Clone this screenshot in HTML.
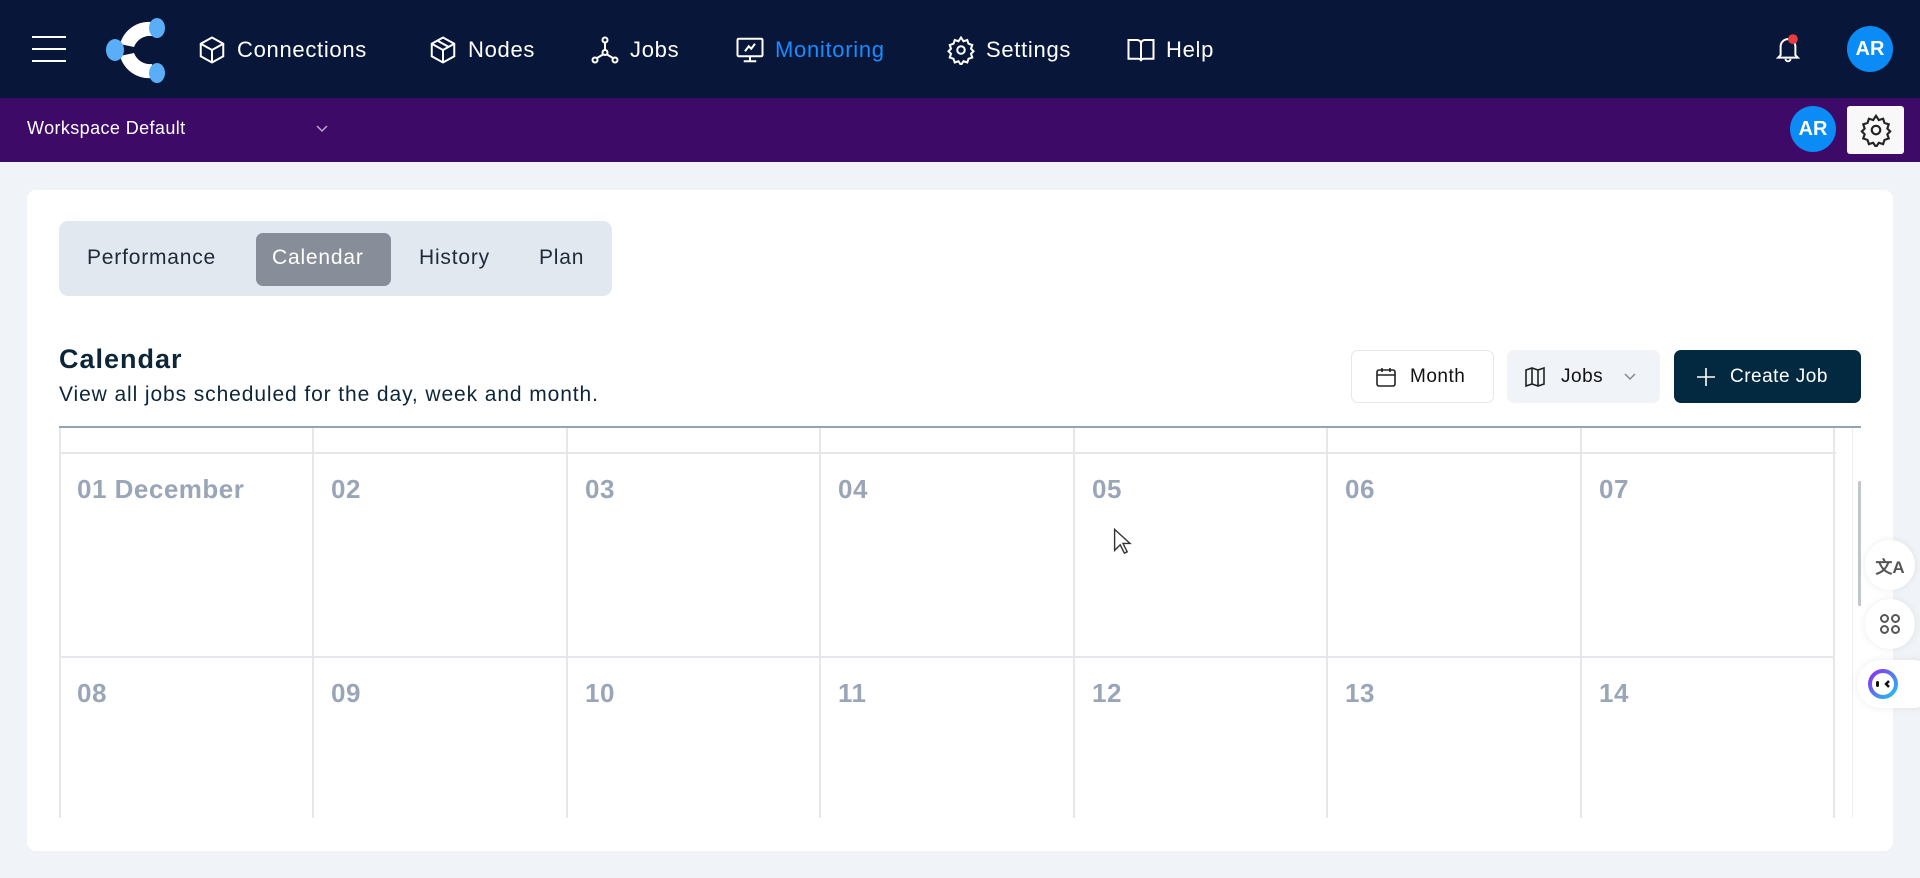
<!DOCTYPE html>
<html><head><meta charset="utf-8"><style>
*{box-sizing:border-box;margin:0;padding:0}
body{width:1920px;height:878px;overflow:hidden;background:#f0f3f7;font-family:"Liberation Sans",sans-serif;position:relative}
.top{position:absolute;left:0;top:0;width:1920px;height:98px;background:#081739}
.ws{position:absolute;left:0;top:98px;width:1920px;height:64px;background:#3d0a68}
.nav{position:absolute;top:35px;color:#fff;font-size:22px;display:flex;align-items:center;gap:10px;letter-spacing:0.7px}
.nav svg{width:30px;height:30px;fill:none;stroke:#fff;stroke-width:1.6}
.av{position:absolute;width:46px;height:46px;border-radius:50%;background:#0a8bf5;color:#fff;font-weight:bold;font-size:20px;display:flex;align-items:center;justify-content:center}
.card{position:absolute;left:27px;top:190px;width:1866px;height:661px;background:#fff;border-radius:9px}
.tabs{position:absolute;left:59px;top:221px;width:553px;height:75px;background:#e2e8f0;border-radius:9px}
.tab{position:absolute;top:246px;font-size:21px;color:#1e2a36;letter-spacing:0.8px}
.btn{position:absolute;top:350px;height:53px;border-radius:7px;display:flex;align-items:center;font-size:19px;letter-spacing:0.5px}
.num{position:absolute;font-size:26px;color:#9aa6b8;font-weight:bold;letter-spacing:0.5px}
.fb{position:absolute;width:50px;height:50px;border-radius:50%;background:#fff;box-shadow:0 0 8px rgba(0,0,0,.08);display:flex;align-items:center;justify-content:center}
</style></head><body>
<div class="top"></div>
<div class="ws"></div>
<div style="position:absolute;left:32px;top:36px;width:34px;height:2px;background:#fff"></div>
<div style="position:absolute;left:32px;top:48px;width:34px;height:2px;background:#fff"></div>
<div style="position:absolute;left:32px;top:60px;width:34px;height:2px;background:#fff"></div>
<svg style="position:absolute;left:100px;top:16px" width="70" height="68" viewBox="0 0 70 68">
<path d="M52 6 A30 30 0 0 0 20 28 L34 31 A17 17 0 0 1 52 20Z" fill="#fff"/>
<path d="M20 40 A30 30 0 0 0 52 62 L52 48 A17 17 0 0 1 34 37Z" fill="#fff"/>
<ellipse cx="57" cy="12" rx="8" ry="10" fill="#5aaef7"/>
<ellipse cx="15" cy="34" rx="9" ry="11" fill="#5aaef7"/>
<ellipse cx="57" cy="57" rx="8" ry="10" fill="#5aaef7"/>
</svg>
<div class="nav" style="left:197px"><svg viewBox="0 0 24 24"><path d="M12 2l9 5v10l-9 5-9-5V7z M3 7l9 5 9-5 M12 12v10"/></svg>Connections</div>
<div class="nav" style="left:428px"><svg viewBox="0 0 24 24"><path d="M12 2l9 5v10l-9 5-9-5V7z M3 7l9 5 9-5 M12 12v10 M7.5 4.5l9 5"/></svg>Nodes</div>
<div class="nav" style="left:590px"><svg viewBox="0 0 24 24"><circle cx="12" cy="4" r="2"/><circle cx="4" cy="20" r="2"/><circle cx="20" cy="20" r="2"/><circle cx="12" cy="14" r="2"/><path d="M12 6v6 M10.5 15.5l-5 3 M13.5 15.5l5 3"/></svg>Jobs</div>
<div class="nav" style="left:735px;color:#1a8cff"><svg viewBox="0 0 24 24"><rect x="2" y="3" width="20" height="14" rx="1"/><path d="M12 17v4 M7 21h10 M8 13l3-4 2 2 3-4"/></svg>Monitoring</div>
<div class="nav" style="left:946px"><svg viewBox="0 0 24 24"><circle cx="12" cy="12" r="3"/><path d="M12 2l2 3 3-1 1 3 3 1-1 3 2 2-2 2 1 3-3 1-1 3-3-1-2 3-2-3-3 1-1-3-3-1 1-3-2-2 2-2-1-3 3-1 1-3 3 1z"/></svg>Settings</div>
<div class="nav" style="left:1126px"><svg viewBox="0 0 24 24"><path d="M2 4h7a3 3 0 0 1 3 3v14a2 2 0 0 0-2-2H2z M22 4h-7a3 3 0 0 0-3 3v14a2 2 0 0 1 2-2h8z"/></svg>Help</div>
<svg style="position:absolute;left:1773px;top:33px" width="30" height="32" viewBox="0 0 24 26"><path d="M6 18V11a6 6 0 0 1 12 0v7l2 2H4z M10 21a2 2 0 0 0 4 0" fill="none" stroke="#fff" stroke-width="1.6"/><circle cx="16" cy="5" r="4" fill="#e53e3e"/></svg>
<div class="av" style="left:1847px;top:26px">AR</div>
<div style="position:absolute;left:27px;top:118px;color:#fff;font-size:18px;letter-spacing:0.4px">Workspace Default</div>
<svg style="position:absolute;left:315px;top:124px" width="14" height="10" viewBox="0 0 14 10"><path d="M2 2l5 5 5-5" fill="none" stroke="#b9a6cc" stroke-width="1.5"/></svg>
<div class="av" style="left:1790px;top:106px">AR</div>
<div style="position:absolute;left:1847px;top:106px;width:57px;height:48px;background:#f8f8f8;border-radius:3px;display:flex;align-items:center;justify-content:center">
<svg width="34" height="34" viewBox="0 0 24 24" fill="none" stroke="#222" stroke-width="1.5"><circle cx="12" cy="12" r="3"/><path d="M12 2l2 3 3-1 1 3 3 1-1 3 2 2-2 2 1 3-3 1-1 3-3-1-2 3-2-3-3 1-1-3-3-1 1-3-2-2 2-2-1-3 3-1 1-3 3 1z"/></svg></div>

<div class="card"></div>
<div class="tabs"></div>
<div style="position:absolute;left:256px;top:233px;width:135px;height:53px;background:#878d99;border-radius:7px"></div>
<div class="tab" style="left:87px">Performance</div>
<div class="tab" style="left:272px;color:#fff">Calendar</div>
<div class="tab" style="left:419px">History</div>
<div class="tab" style="left:539px">Plan</div>
<div style="position:absolute;left:59px;top:344px;font-size:27px;font-weight:bold;color:#0d2538;letter-spacing:1px">Calendar</div>
<div style="position:absolute;left:59px;top:383px;font-size:21px;color:#0d2538;letter-spacing:0.9px">View all jobs scheduled for the day, week and month.</div>

<div class="btn" style="left:1351px;width:143px;border:1.5px solid #e5e7eb;background:#fff;color:#111"><svg style="margin:0 12px 0 22px" width="24" height="24" viewBox="0 0 24 24" fill="none" stroke="#222" stroke-width="1.6"><rect x="3" y="5" width="18" height="16" rx="2"/><path d="M3 10h18 M8 3v4 M16 3v4"/></svg>Month</div>
<div class="btn" style="left:1507px;width:153px;background:#f0f3f7;color:#111"><svg style="margin:0 14px 0 16px" width="24" height="24" viewBox="0 0 24 24" fill="none" stroke="#222" stroke-width="1.6"><path d="M3 5l6-2 6 2 6-2v16l-6 2-6-2-6 2z M9 3v16 M15 5v16"/></svg>Jobs<svg style="margin-left:20px" width="14" height="10" viewBox="0 0 14 10"><path d="M2 2l5 5 5-5" fill="none" stroke="#888" stroke-width="1.5"/></svg></div>
<div class="btn" style="left:1674px;width:187px;background:#032940;color:#fff"><svg style="margin:0 14px 0 22px" width="20" height="20" viewBox="0 0 20 20" stroke="#fff" stroke-width="1.6"><path d="M10 1v18 M1 10h18"/></svg>Create Job</div>

<div style="position:absolute;left:59px;top:426px;width:1802px;height:392px;overflow:hidden">
<div style="position:absolute;left:0;top:0;width:1802px;height:2px;background:#94a3b8;z-index:2"></div>
<div style="position:absolute;left:0;top:0;width:1775px;height:392px;border-left:2px solid #e5e7eb">
<div style="position:absolute;left:0;top:0;width:1775px;height:28px;border-bottom:2px solid #e5e7eb"></div>
</div>
<div style="position:absolute;left:1799px;top:55px;width:4px;height:125px;background:#c2c6cc;border-radius:2px"></div>
<div style="position:absolute;left:1793px;top:0;width:1px;height:392px;background:#eee"></div>
</div>
<div id="g"></div>
<script>
var xs=[59,313,567,820,1074,1327,1581,1834];
var r1=['01 December','02','03','04','05','06','07'],r2=['08','09','10','11','12','13','14'];
var h='';
for(var i=0;i<7;i++){
 h+='<div style="position:absolute;left:'+(xs[i+1]-1)+'px;top:428px;width:2px;height:390px;background:#e5e7eb"></div>';
 h+='<div class="num" style="left:'+(xs[i]+18)+'px;top:474px">'+r1[i]+'</div>';
 h+='<div class="num" style="left:'+(xs[i]+18)+'px;top:678px">'+r2[i]+'</div>';
}
h+='<div style="position:absolute;left:59px;top:656px;width:1776px;height:2px;background:#e5e7eb"></div>';
document.getElementById('g').innerHTML=h;
</script>
<svg style="position:absolute;left:1113px;top:528px" width="20" height="28" viewBox="0 0 14 20"><path d="M1 1v15l4-4 3 6 2-1-3-6h5z" fill="#fff" stroke="#333" stroke-width="1"/></svg>
<div class="fb" style="left:1865px;top:540px;font-size:17px;color:#555;font-weight:bold">文A</div>
<div class="fb" style="left:1865px;top:599px"><svg width="24" height="24" viewBox="0 0 24 24" fill="none" stroke="#555" stroke-width="2"><rect x="3" y="3" width="7" height="7" rx="3.5"/><rect x="14" y="3" width="7" height="7" rx="3.5"/><rect x="3" y="14" width="7" height="7" rx="3.5"/><rect x="14" y="14" width="7" height="7" rx="3.5"/></svg></div>
<div style="position:absolute;left:1857px;top:660px;width:80px;height:48px;border-radius:24px;background:#fff;box-shadow:0 0 8px rgba(0,0,0,.08)"><svg style="position:absolute;left:10px;top:8px" width="32" height="32" viewBox="0 0 32 32"><defs><linearGradient id="lg" x1="0" y1="0" x2="1" y2="1"><stop offset="0" stop-color="#8b2cf5"/><stop offset="1" stop-color="#22c3f0"/></linearGradient></defs><circle cx="16" cy="16" r="13" fill="#fff" stroke="url(#lg)" stroke-width="4"/><rect x="9" y="13" width="3" height="6" rx="1.5" fill="#111"/><path d="M22 13l-3 3 3 3" stroke="#111" stroke-width="2.5" fill="none"/></svg></div>
</body></html>
